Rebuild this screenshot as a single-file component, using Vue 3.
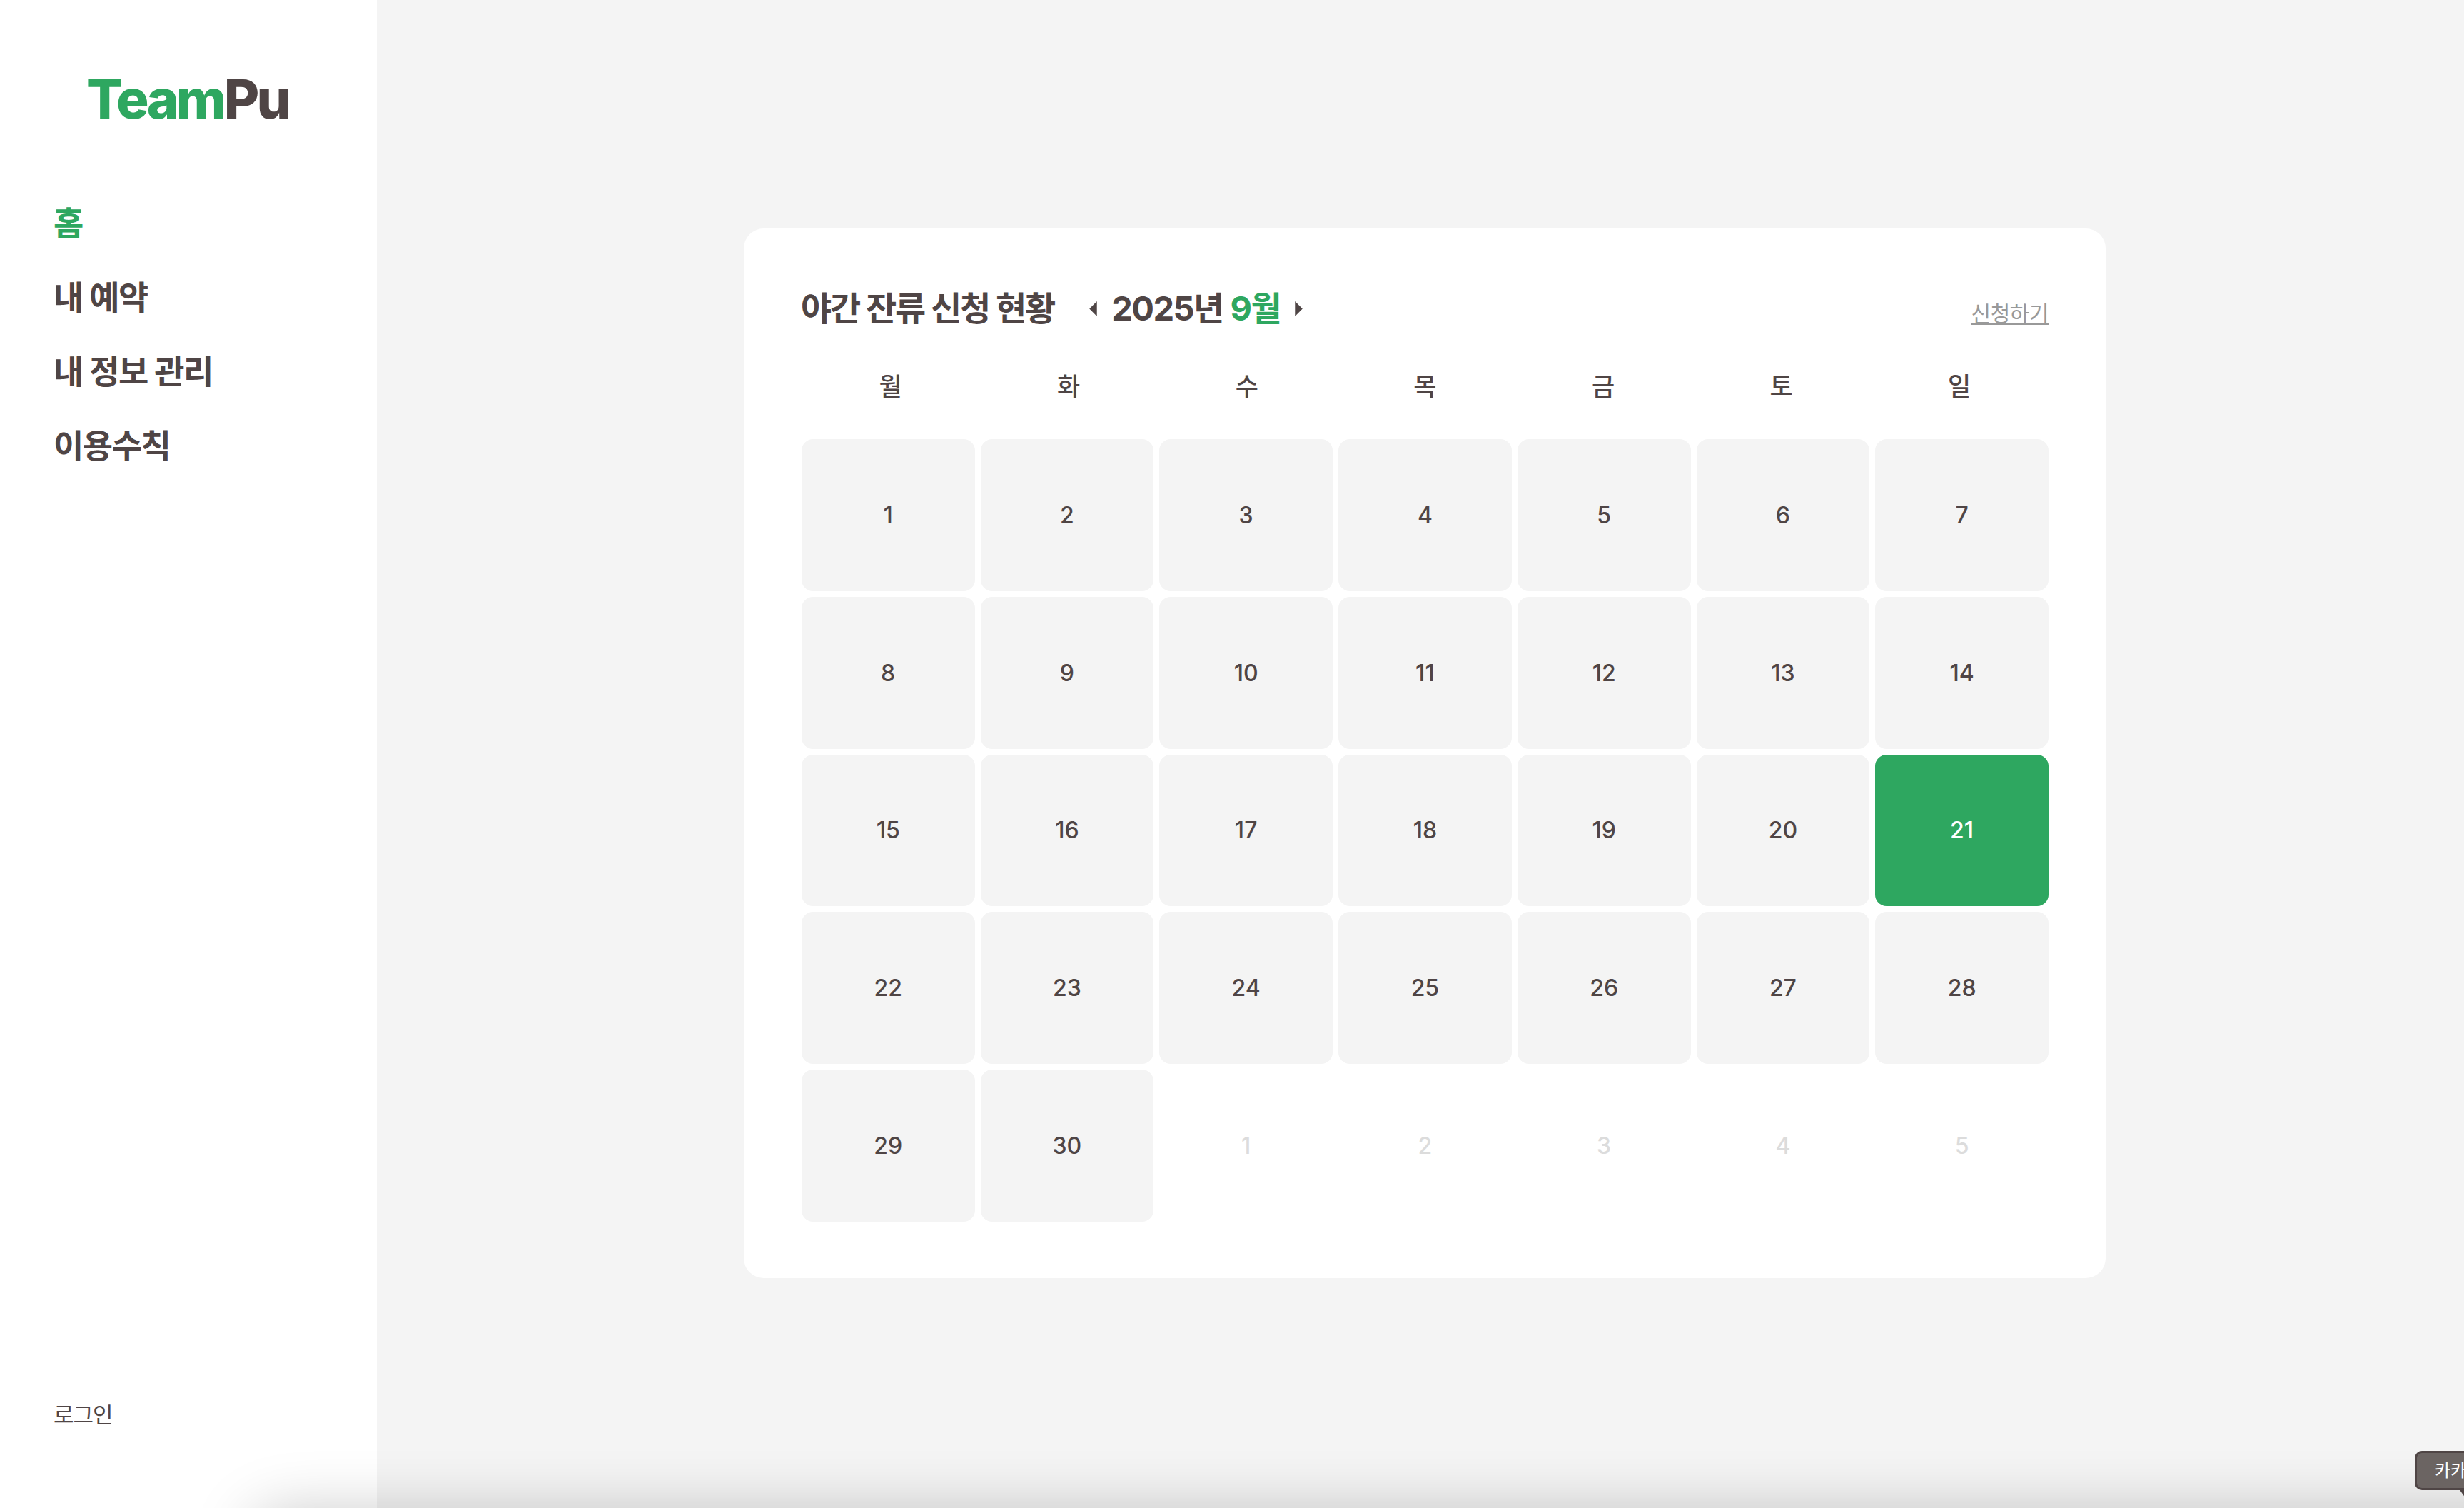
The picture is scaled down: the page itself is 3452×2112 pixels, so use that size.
<script setup>
const nav = [
  { label: '홈', active: true },
  { label: '내 예약' },
  { label: '내 정보 관리' },
  { label: '이용수칙' },
]
const weekdays = ['월', '화', '수', '목', '금', '토', '일']
const days = []
for (let d = 1; d <= 30; d++) days.push({ n: d, kind: d === 21 ? 'today' : 'day' })
for (let d = 1; d <= 5; d++) days.push({ n: d, kind: 'other' })
</script>

<template>
  <div class="page">
    <aside class="sidebar">
      <div class="logo"><span class="green">Team</span>Pu</div>
      <nav class="nav">
        <a v-for="item in nav" :key="item.label" class="nav-item" :class="{ active: item.active }">{{ item.label }}</a>
      </nav>
      <a class="login">로그인</a>
    </aside>
    <main class="main">
      <section class="card">
        <header class="head">
          <h2 class="title">야간 잔류 신청 현황</h2>
          <div class="month">
            <svg class="arrow" viewBox="0 0 10 20"><path d="M10 0V20L0 10Z" /></svg>
            <span class="month-text">2025년 <span class="green">9월</span></span>
            <svg class="arrow" viewBox="0 0 10 20"><path d="M0 0V20L10 10Z" /></svg>
          </div>
          <a class="apply">신청하기</a>
        </header>
        <div class="weekdays">
          <div v-for="w in weekdays" :key="w" class="weekday">{{ w }}</div>
        </div>
        <div class="grid">
          <div v-for="(d, i) in days" :key="i" class="cell" :class="d.kind">{{ d.n }}</div>
        </div>
      </section>
    </main>
    <div class="shade"></div>
    <div class="bubble">카카오톡</div>
  </div>
</template>

<style>
html, body { margin: 0; padding: 0; background: #f4f4f4; }
</style>

<style scoped>
.page {
  position: relative;
  display: flex;
  width: 3452px;
  height: 2112px;
  overflow: hidden;
  font-family: Inter, "Noto Sans CJK KR", sans-serif;
  color: #4f4545;
}
.green { color: #2ea760; }
.sidebar {
  width: 528px;
  flex: none;
  background: #fff;
  display: flex;
  flex-direction: column;
  padding: 92px 0 0 75px;
  box-sizing: border-box;
}
.logo {
  margin-left: 46px;
  font-size: 76px;
  line-height: 92px;
  font-weight: 800;
  letter-spacing: -3.6px;
}
.nav {
  margin-top: 76px;
  display: flex;
  flex-direction: column;
}
.nav-item {
  height: 104px;
  line-height: 104px;
  font-size: 46px;
  font-weight: 700;
  letter-spacing: -1.5px;
}
.nav-item.active { color: #2ea760; }
.login {
  margin-top: auto;
  margin-bottom: 102px;
  font-size: 31px;
  line-height: 56px;
  letter-spacing: -1px;
  font-weight: 400;
}
.main {
  flex: 1;
  background: #f4f4f4;
  display: flex;
  align-items: center;
  padding-left: 514px;
  padding-bottom: 2px;
}
.card {
  width: 1908px;
  height: 1470px;
  box-sizing: border-box;
  background: #fff;
  border-radius: 28px;
  padding: 80px 80px 80px 80.8px;
}
.head {
  display: flex;
  align-items: center;
  height: 64px;
}
.title {
  margin: 0 0 0 -0.8px;
  font-size: 47px;
  font-weight: 700;
  letter-spacing: -2.2px;
  line-height: 62px;
}
.month {
  margin-left: 49px;
  display: flex;
  align-items: center;
  gap: 20px;
}
.arrow { width: 11px; height: 21px; fill: #4f4545; }
.month-text {
  font-size: 47px;
  font-weight: 700;
  letter-spacing: -1.5px;
  line-height: 62px;
}
.apply {
  margin-left: auto;
  margin-top: 14px;
  font-size: 30px;
  line-height: 40px;
  color: #999;
  text-decoration: underline;
  letter-spacing: -0.5px;
}
.weekdays {
  margin-top: 47px;
  display: grid;
  grid-template-columns: repeat(7, 1fr);
}
.weekday {
  text-align: center;
  font-size: 35px;
  font-weight: 500;
  line-height: 60px;
}
.grid {
  margin-top: 44px;
  display: grid;
  grid-template-columns: repeat(7, 1fr);
  grid-auto-rows: 212.8px;
  gap: 8px;
}
.cell {
  display: flex;
  align-items: center;
  justify-content: center;
  font-size: 32px;
  font-weight: 500;
  border-radius: 16px;
  background: #f4f4f4;
}
.cell.today { background: #2ea760; color: #fff; }
.cell.other { background: transparent; color: #dcdcdc; }
.shade {
  position: absolute;
  left: 350px;
  right: -200px;
  top: 2118px;
  height: 100px;
  border-radius: 100px;
  box-shadow: 0 0 86px rgba(0, 0, 0, 0.22);
  pointer-events: none;
}
.bubble {
  position: absolute;
  left: 3383px;
  top: 2032px;
  width: 140px;
  height: 55px;
  box-sizing: border-box;
  padding-left: 25px;
  background: #6b6462;
  border: 3px solid #4f4545;
  border-radius: 10px;
  color: #fff;
  font-size: 24px;
  line-height: 49px;
  white-space: nowrap;
}
.bubble::after {
  content: "";
  position: absolute;
  left: 58px;
  top: 49px;
  border-top: 14px solid #4f4545;
  border-left: 10px solid transparent;
  border-right: 4px solid transparent;
}
</style>
